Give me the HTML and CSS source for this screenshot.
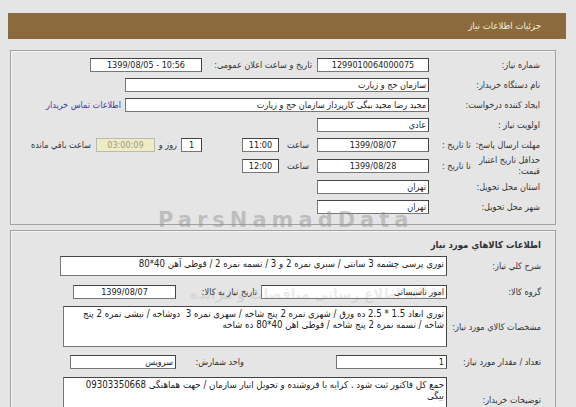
FILE: index.html
```html
<!DOCTYPE html>
<html lang="fa" dir="rtl">
<head>
<meta charset="utf-8">
<title>جزئیات اطلاعات نیاز</title>
<link rel="stylesheet" href="styles.css">
</head>
<body>
<div class="page">
  <div class="titlebar">جزئیات اطلاعات نیاز</div>

  <section class="panel info">
    <div class="row">
      <div class="lbl">شماره نیاز:</div>
      <div class="box w112 c">1299010064000075</div>
      <div class="pub-lbl">تاریخ و ساعت اعلان عمومی:</div>
      <div class="box w112 c"><bdi dir="ltr">1399/08/05 - 10:56</bdi></div>
    </div>
    <div class="row">
      <div class="lbl">نام دستگاه خریدار:</div>
      <div class="box w304">سازمان حج و زیارت</div>
    </div>
    <div class="row">
      <div class="lbl">ایجاد کننده درخواست:</div>
      <div class="box w304">مجید رضا مجید بیگی کارپرداز سازمان حج و زیارت</div>
      <a class="contact" href="#">اطلاعات تماس خریدار</a>
    </div>
    <div class="row">
      <div class="lbl">اولویت نیاز :</div>
      <div class="box w112">عادي</div>
    </div>
    <div class="row">
      <div class="lbl split"><span>مهلت ارسال پاسخ:</span><span class="until">تا تاریخ :</span></div>
      <div class="box w112 c">1399/08/07</div>
      <span class="saat">ساعت</span>
      <div class="box w37 c">11:00</div>
      <div class="box w21 c days">1</div>
      <span class="roz">روز و</span>
      <div class="box w59 c remain">03:00:09</div>
      <span class="remain-lbl">ساعت باقي مانده</span>
    </div>
    <div class="row tall">
      <div class="lbl split"><span class="two">حداقل تاریخ اعتبار<br>قیمت:</span><span class="until">تا تاریخ :</span></div>
      <div class="box w112 c">1399/08/28</div>
      <span class="saat">ساعت</span>
      <div class="box w37 c">12:00</div>
    </div>
    <div class="row">
      <div class="lbl">استان محل تحویل:</div>
      <div class="box w112">تهران</div>
    </div>
    <div class="row">
      <div class="lbl">شهر محل تحویل:</div>
      <div class="box w112">تهران</div>
    </div>
  </section>

  <section class="panel goods">
    <h2 class="goods-title">اطلاعات کالاهاي مورد نياز</h2>
    <div class="grow">
      <div class="glbl">شرح کلي نياز:</div>
      <div class="area a1">توری پرسی چشمه 3 سانتی / سبزی نمره 2 و 3 / تسمه نمره 2 / قوطی آهن 40*80</div>
    </div>
    <div class="grow irow ir1">
      <div class="glbl">گروه کالا:</div>
      <div class="box w186">امور تاسیساتی</div>
      <div class="need-lbl">تاریخ نیاز به کالا:</div>
      <div class="box w103 c">1399/08/07</div>
    </div>
    <div class="grow">
      <div class="glbl">مشخصات کالاي مورد نياز:</div>
      <div class="area a3">توری ابعاد 1.5 * 2.5 ده ورق / شهری نمره 2 پنج شاخه / سهری نمره 3&nbsp; دوشاخه / نیشی نمره 2 پنج<br>شاخه / تسمه نمره 2 پنج شاخه / قوطی اهن 40*80 ده شاخه</div>
    </div>
    <div class="grow irow ir2">
      <div class="glbl">تعداد / مقدار مورد نیاز:</div>
      <div class="box w111">1</div>
      <div class="unit-lbl">واحد شمارش:</div>
      <div class="box w106">سرویس</div>
    </div>
    <div class="grow a4row">
      <div class="glbl">توضیحات خریدار:</div>
      <div class="area a4">جمع کل فاکتور ثبت شود . کرایه با فروشنده و تحویل انبار سازمان / جهت هماهنگی 09303350668<br>بیگی</div>
    </div>
  </section>
</div>
<div class="wm wm-latin">ParsNamadData</div>
<div class="wm wm-fa">پایگاه اطلاع رسانی مناقصات و مزایده</div>
</body>
</html>
```

FILE: styles.css
```css
html, body {
  margin: 0;
  padding: 0;
  background: #e5e5e5;
}
body {
  font-family: "DejaVu Sans Condensed", "DejaVu Sans", sans-serif;
  font-stretch: condensed;
  font-size: 9px;
  color: #333;
  direction: rtl;
  position: relative;
  overflow: hidden;
  height: 407px;
}
.page {
  padding: 13px 10px 0 8px;
}
.titlebar {
  height: 26px;
  line-height: 26px;
  background: #8b6b3e;
  color: #f4ecdc;
  padding-right: 25px;
  font-size: 9.5px;
}
.panel {
  margin: 11px 10px 0 2px;
  border: 1px solid #a2a2a2;
  box-shadow: inset 1px 1px 0 #f4f4f4;
}
.info {
  padding: 4px 15px 7px 0;
}
.row {
  display: flex;
  align-items: center;
  height: 20px;
}
.row.tall {
  height: 22px;
}
.lbl {
  flex: none;
  width: 111px;
  white-space: nowrap;
}
.lbl.split {
  display: flex;
  justify-content: space-between;
  align-items: center;
  box-sizing: border-box;
  padding-left: 13px;
}
.lbl .two {
  line-height: 11px;
}
.box {
  flex: none;
  box-sizing: border-box;
  height: 14px;
  line-height: 12px;
  background: #fff;
  border: 1px solid #777;
  border-top-color: #444;
  border-right-color: #444;
  padding: 0 2px;
  white-space: nowrap;
  overflow: hidden;
  color: #222;
}
.c { text-align: center; }
.w112 { width: 112px; }
.w304 { width: 304px; }
.w37 { width: 37px; }
.w21 { width: 21px; }
.w59 { width: 59px; }
.w186 { width: 186px; }
.w103 { width: 103px; }
.w111 { width: 111px; }
.w106 { width: 106px; }

.pub-lbl {
  flex: none;
  width: 102px;
  margin: 0 5px 0 8px;
  white-space: nowrap;
}
.contact {
  margin-right: 4px;
  color: #3c3ca6;
  text-decoration: none;
  white-space: nowrap;
}
.saat {
  flex: none;
  width: 20px;
  margin: 0 8px 0 10px;
  white-space: nowrap;
}
.days {
  margin-right: 40px;
}
.roz {
  flex: none;
  width: 20px;
  margin: 0 4px 0 2px;
  white-space: nowrap;
}
.remain {
  background: #efebc3;
  border-color: #b9b9b9;
  color: #9b9b86;
}
.remain-lbl {
  margin-right: 5px;
  white-space: nowrap;
}

.goods {
  margin-top: 5px;
  padding: 0 14px 20px 0;
}
.goods-title {
  margin: 3px 0 0;
  height: 22px;
  line-height: 22px;
  font-size: 9.5px;
  font-weight: bold;
  color: #333;
}
.grow {
  display: flex;
  align-items: center;
}
.glbl {
  flex: none;
  width: 94px;
  white-space: nowrap;
}
.area {
  flex: none;
  box-sizing: border-box;
  background: #fff;
  border: 1px solid #777;
  border-top-color: #444;
  border-right-color: #444;
  padding: 1px 2px;
  font-size: 9.6px;
  line-height: 11px;
  color: #222;
  white-space: nowrap;
  overflow: hidden;
}
.a1 { width: 387px; height: 20px; }
.a3 { width: 384px; height: 41px; }
.a4 { width: 384px; height: 46px; }
.irow { height: 28px; }
.ir1 { margin-top: 2px; }
.ir2 { margin-top: 1px; }
.a4row { margin-top: 1px; }
.need-lbl {
  flex: none;
  width: 81px;
  padding-right: 4px;
  white-space: nowrap;
}
.unit-lbl {
  flex: none;
  width: 68px;
  padding-right: 92px;
  white-space: nowrap;
}

.wm {
  position: absolute;
  pointer-events: none;
  white-space: nowrap;
}
.wm-latin {
  left: 158px;
  top: 208px;
  direction: ltr;
  font-family: "DejaVu Sans", sans-serif;
  font-stretch: normal;
  font-weight: bold;
  font-size: 21px;
  letter-spacing: 5px;
  color: rgba(140, 140, 140, 0.45);
}
.wm-fa {
  left: 190px;
  top: 285px;
  font-size: 15px;
  font-weight: bold;
  color: rgba(150, 150, 150, 0.2);
}
```
